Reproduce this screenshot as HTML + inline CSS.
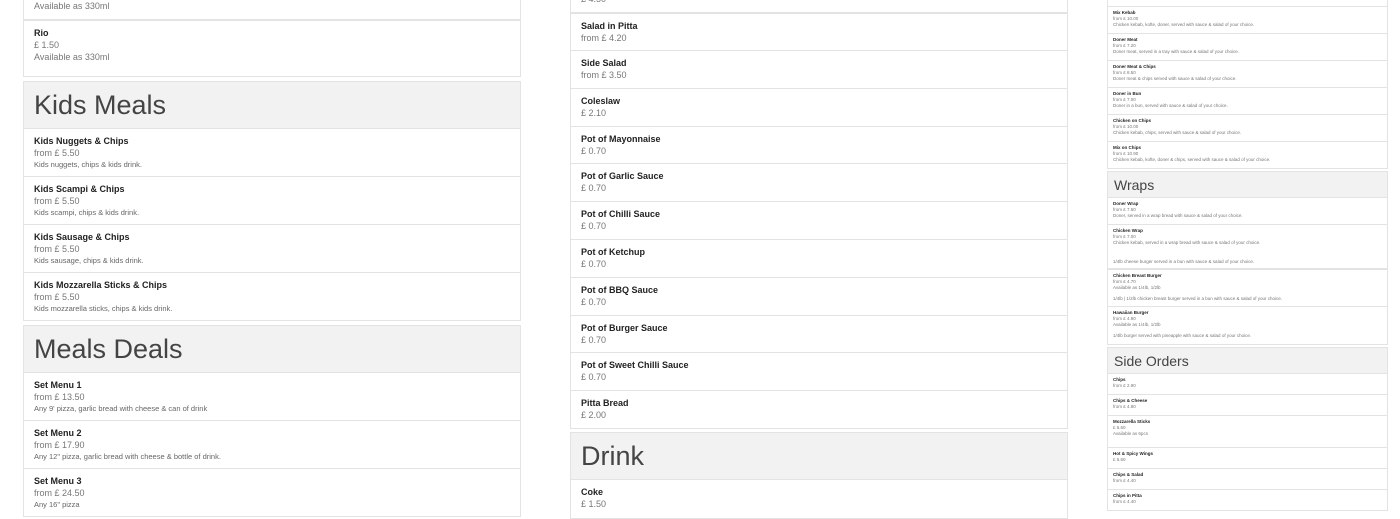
<!DOCTYPE html><html><head><style>
*{margin:0;padding:0;box-sizing:border-box}
body{width:1400px;height:500px;overflow:hidden;background:#fff;font-family:"Liberation Sans",sans-serif;position:relative}
.b{position:absolute;border:1px solid #e3e3e3;border-top:none;background:#fff}
.b.t{border-top:1px solid #e3e3e3}
.h{position:absolute;background:#f2f2f2;border:1px solid #e3e3e3;border-bottom:none;color:#444;font-weight:300}
.n{font-weight:bold;color:#222}
.p,.d{color:#777}
.L .n,.M .n{font-size:9px;line-height:12px}
.L .p,.M .p{font-size:9px;line-height:12px}
.L .d{font-size:7.5px;line-height:12px;color:#666}
.L,.M{padding:6px 10px}
.R{padding:3px 5px}
.R .n{font-size:4.5px;line-height:6px}
.R .p,.R .d{font-size:4.5px;line-height:6px}
.lh{font-size:27px;padding-left:10px}
.rh{font-size:14px;padding-left:6px}
</style></head><body>
<!-- left -->
<div class="b L" style="left:23px;top:-30px;width:498px;height:50px"><div class="n">Tango</div><div class="p">£ 1.50</div><div class="p" style="font-size:9px">Available as 330ml</div></div>
<div class="b L t" style="left:23px;top:20px;width:498px;height:57px"><div class="n">Rio</div><div class="p">£ 1.50</div><div class="p">Available as 330ml</div></div>
<div class="h lh" style="left:23px;top:81px;width:498px;height:47px;line-height:47px">Kids Meals</div>
<div class="b L t" style="left:23px;top:128px;width:498px;height:49px"><div class="n">Kids Nuggets &amp; Chips</div><div class="p">from £ 5.50</div><div class="d">Kids nuggets, chips &amp; kids drink.</div></div>
<div class="b L" style="left:23px;top:177px;width:498px;height:48px"><div class="n">Kids Scampi &amp; Chips</div><div class="p">from £ 5.50</div><div class="d">Kids scampi, chips &amp; kids drink.</div></div>
<div class="b L t" style="left:23px;top:224px;width:498px;height:49px"><div class="n">Kids Sausage &amp; Chips</div><div class="p">from £ 5.50</div><div class="d">Kids sausage, chips &amp; kids drink.</div></div>
<div class="b L t" style="left:23px;top:272px;width:498px;height:49px"><div class="n">Kids Mozzarella Sticks &amp; Chips</div><div class="p">from £ 5.50</div><div class="d">Kids mozzarella sticks, chips &amp; kids drink.</div></div>
<div class="h lh" style="left:23px;top:325px;width:498px;height:47px;line-height:47px">Meals Deals</div>
<div class="b L t" style="left:23px;top:372px;width:498px;height:49px"><div class="n">Set Menu 1</div><div class="p">from £ 13.50</div><div class="d">Any 9' pizza, garlic bread with cheese &amp; can of drink</div></div>
<div class="b L t" style="left:23px;top:420px;width:498px;height:49px"><div class="n">Set Menu 2</div><div class="p">from £ 17.90</div><div class="d">Any 12" pizza, garlic bread with cheese &amp; bottle of drink.</div></div>
<div class="b L t" style="left:23px;top:468px;width:498px;height:49px"><div class="n">Set Menu 3</div><div class="p">from £ 24.50</div><div class="d">Any 16" pizza</div></div>
<!-- middle -->
<div class="b M" style="left:570px;top:-25px;width:498px;height:38px"><div class="n">Chips</div><div class="p">£ 4.50</div></div>
<div class="b M t" style="left:570px;top:13px;width:498px;height:38px"><div class="n">Salad in Pitta</div><div class="p">from £ 4.20</div></div>
<div class="b M t" style="left:570px;top:50px;width:498px;height:39px"><div class="n">Side Salad</div><div class="p">from £ 3.50</div></div>
<div class="b M t" style="left:570px;top:88px;width:498px;height:39px"><div class="n">Coleslaw</div><div class="p">£ 2.10</div></div>
<div class="b M t" style="left:570px;top:126px;width:498px;height:38px"><div class="n">Pot of Mayonnaise</div><div class="p">£ 0.70</div></div>
<div class="b M t" style="left:570px;top:163px;width:498px;height:39px"><div class="n">Pot of Garlic Sauce</div><div class="p">£ 0.70</div></div>
<div class="b M t" style="left:570px;top:201px;width:498px;height:39px"><div class="n">Pot of Chilli Sauce</div><div class="p">£ 0.70</div></div>
<div class="b M t" style="left:570px;top:239px;width:498px;height:39px"><div class="n">Pot of Ketchup</div><div class="p">£ 0.70</div></div>
<div class="b M t" style="left:570px;top:277px;width:498px;height:39px"><div class="n">Pot of BBQ Sauce</div><div class="p">£ 0.70</div></div>
<div class="b M t" style="left:570px;top:315px;width:498px;height:38px"><div class="n">Pot of Burger Sauce</div><div class="p">£ 0.70</div></div>
<div class="b M t" style="left:570px;top:352px;width:498px;height:39px"><div class="n">Pot of Sweet Chilli Sauce</div><div class="p">£ 0.70</div></div>
<div class="b M t" style="left:570px;top:390px;width:498px;height:39px"><div class="n">Pitta Bread</div><div class="p">£ 2.00</div></div>
<div class="h lh" style="left:570px;top:432px;width:498px;height:47px;line-height:47px">Drink</div>
<div class="b M t" style="left:570px;top:479px;width:498px;height:40px"><div class="n">Coke</div><div class="p">£ 1.50</div></div>
<!-- right -->
<div class="b R" style="left:1107px;top:-21px;width:281px;height:28px"><div class="n">Kebab</div><div class="p">from £ 7.00</div><div class="d">Chicken kebab, served in a bun with sauce &amp; salad of your choice.</div></div>
<div class="b R t" style="left:1107px;top:6px;width:281px;height:28px"><div class="n">Mix Kebab</div><div class="p">from £ 10.00</div><div class="d">Chicken kebab, kofte, doner, served with sauce &amp; salad of your choice.</div></div>
<div class="b R t" style="left:1107px;top:33px;width:281px;height:28px"><div class="n">Doner Meat</div><div class="p">from £ 7.20</div><div class="d">Doner meat, served in a tray with sauce &amp; salad of your choice.</div></div>
<div class="b R t" style="left:1107px;top:60px;width:281px;height:28px"><div class="n">Doner Meat &amp; Chips</div><div class="p">from £ 8.50</div><div class="d">Doner meat &amp; chips served with sauce &amp; salad of your choice.</div></div>
<div class="b R t" style="left:1107px;top:87px;width:281px;height:28px"><div class="n">Doner in Bun</div><div class="p">from £ 7.00</div><div class="d">Doner in a bun, served with sauce &amp; salad of your choice.</div></div>
<div class="b R t" style="left:1107px;top:114px;width:281px;height:28px"><div class="n">Chicken on Chips</div><div class="p">from £ 10.00</div><div class="d">Chicken kebab, chips, served with sauce &amp; salad of your choice.</div></div>
<div class="b R t" style="left:1107px;top:141px;width:281px;height:28px"><div class="n">Mix on Chips</div><div class="p">from £ 10.90</div><div class="d">Chicken kebab, kofte, doner &amp; chips, served with sauce &amp; salad of your choice.</div></div>
<div class="h rh" style="left:1107px;top:171px;width:281px;height:26px;line-height:26px">Wraps</div>
<div class="b R t" style="left:1107px;top:197px;width:281px;height:28px"><div class="n">Doner Wrap</div><div class="p">from £ 7.50</div><div class="d">Doner, served in a wrap bread with sauce &amp; salad of your choice.</div></div>
<div class="b R t" style="left:1107px;top:224px;width:281px;height:28px"><div class="n">Chicken Wrap</div><div class="p">from £ 7.00</div><div class="d">Chicken kebab, served in a wrap bread with sauce &amp; salad of your choice.</div></div>
<div class="b R" style="left:1107px;top:251px;width:281px;height:18px"><div class="d" style="margin-top:5px">1/4lb cheese burger served in a bun with sauce &amp; salad of your choice.</div></div>
<div class="b R t" style="left:1107px;top:269px;width:281px;height:38px"><div class="n">Chicken Breast Burger</div><div class="p">from £ 4.70</div><div class="d">Available as 1/4lb, 1/2lb</div><div class="d" style="margin-top:5px">1/4lb | 1/2lb chicken breast burger served in a bun with sauce &amp; salad of your choice.</div></div>
<div class="b R t" style="left:1107px;top:306px;width:281px;height:39px"><div class="n">Hawaiian Burger</div><div class="p">from £ 4.90</div><div class="d">Available as 1/4lb, 1/2lb</div><div class="d" style="margin-top:5px">1/4lb burger served with pineapple with sauce &amp; salad of your choice.</div></div>
<div class="h rh" style="left:1107px;top:347px;width:281px;height:26px;line-height:26px">Side Orders</div>
<div class="b R t" style="left:1107px;top:373px;width:281px;height:22px"><div class="n">Chips</div><div class="p">from £ 2.90</div></div>
<div class="b R t" style="left:1107px;top:394px;width:281px;height:22px"><div class="n">Chips &amp; Cheese</div><div class="p">from £ 4.80</div></div>
<div class="b R t" style="left:1107px;top:415px;width:281px;height:33px"><div class="n">Mozzarella Sticks</div><div class="p">£ 5.60</div><div class="d">Available as 6pcs</div></div>
<div class="b R t" style="left:1107px;top:447px;width:281px;height:22px"><div class="n">Hot &amp; Spicy Wings</div><div class="p">£ 5.60</div></div>
<div class="b R t" style="left:1107px;top:468px;width:281px;height:22px"><div class="n">Chips &amp; Salad</div><div class="p">from £ 4.40</div></div>
<div class="b R t" style="left:1107px;top:489px;width:281px;height:22px"><div class="n">Chips in Pitta</div><div class="p">from £ 4.40</div></div>
</body></html>
